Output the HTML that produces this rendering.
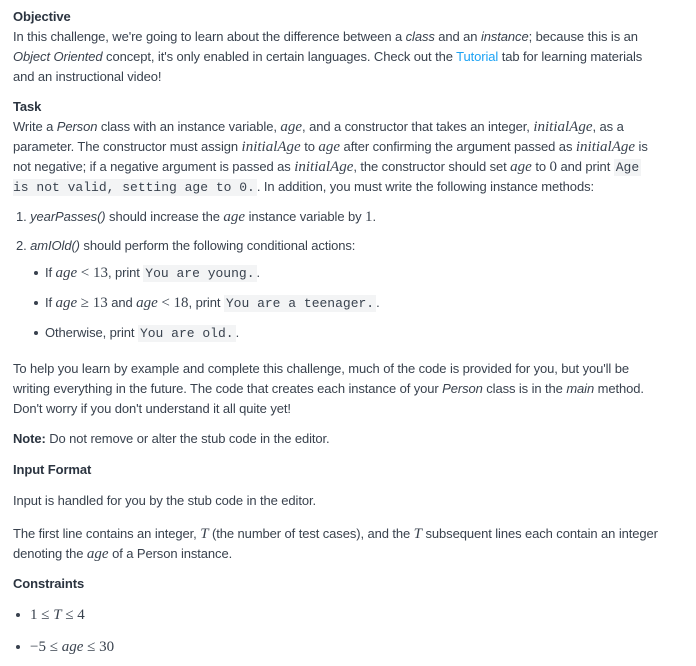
<!DOCTYPE html>
<html><head><meta charset="utf-8"><style>
body{margin:0;width:696px;height:666px;background:#fff;overflow:hidden;font-family:"Liberation Sans",sans-serif;font-size:13px;letter-spacing:-0.1px;color:#39424e;}
.l{position:absolute;left:13px;white-space:nowrap;line-height:20px;height:20px;}
b{font-weight:bold;color:#2b3440}
i{font-style:italic}
.m{font-family:"Liberation Serif",serif;font-style:italic;font-size:15px;letter-spacing:0}
.n{font-family:"Liberation Serif",serif;font-size:15px;letter-spacing:0}
code{font-family:"Liberation Mono",monospace;font-size:13px;letter-spacing:0;background:#f3f4f5;padding:1px 2px;color:#39424e}
a{color:#1ba2f4;text-decoration:none}
.bul{position:absolute;left:34px;width:4px;height:4px;border-radius:50%;background:#39424e}
</style></head><body>
<div class="l" style="top:7px"><b>Objective</b></div>
<div class="l" style="top:27px">In this challenge, we're going to learn about the difference between a <i>class</i> and an <i>instance</i>; because this is an</div>
<div class="l" style="top:47px"><i>Object Oriented</i> concept, it's only enabled in certain languages. Check out the <a>Tutorial</a> tab for learning materials</div>
<div class="l" style="top:67px">and an instructional video!</div>
<div class="l" style="top:97px"><b>Task</b></div>
<div class="l" style="top:117px">Write a <i>Person</i> class with an instance variable, <span class="m">age</span>, and a constructor that takes an integer, <span class="m">initialAge</span>, as a</div>
<div class="l" style="top:137px">parameter. The constructor must assign <span class="m">initialAge</span> to <span class="m">age</span> after confirming the argument passed as <span class="m">initialAge</span> is</div>
<div class="l" style="top:157px">not negative; if a negative argument is passed as <span class="m">initialAge</span>, the constructor should set <span class="m">age</span> to <span class="n">0</span> and print <code>Age</code></div>
<div class="l" style="top:177px"><code style="padding-left:0">is not valid, setting age to 0.</code>. In addition, you must write the following instance methods:</div>
<div class="l" style="top:207px;left:16px">1. <i>yearPasses()</i> should increase the <span class="m">age</span> instance variable by <span class="n">1</span>.</div>
<div class="l" style="top:236px;left:16px">2. <i>amIOld()</i> should perform the following conditional actions:</div>
<div class="bul" style="top:271px"></div>
<div class="l" style="top:263px;left:45px">If <span class="m">age</span> <span class="n">&lt; 13</span>, print <code>You are young.</code>.</div>
<div class="bul" style="top:301px"></div>
<div class="l" style="top:293px;left:45px">If <span class="m">age</span> <span class="n">≥ 13</span> and <span class="m">age</span> <span class="n">&lt; 18</span>, print <code>You are a teenager.</code>.</div>
<div class="bul" style="top:331px"></div>
<div class="l" style="top:323px;left:45px">Otherwise, print <code>You are old.</code>.</div>
<div class="l" style="top:359px">To help you learn by example and complete this challenge, much of the code is provided for you, but you'll be</div>
<div class="l" style="top:379px">writing everything in the future. The code that creates each instance of your <i>Person</i> class is in the <i>main</i> method.</div>
<div class="l" style="top:399px">Don't worry if you don't understand it all quite yet!</div>
<div class="l" style="top:429px"><b>Note:</b> Do not remove or alter the stub code in the editor.</div>
<div class="l" style="top:460px"><b>Input Format</b></div>
<div class="l" style="top:491px">Input is handled for you by the stub code in the editor.</div>
<div class="l" style="top:524px">The first line contains an integer, <span class="m">T</span> (the number of test cases), and the <span class="m">T</span> subsequent lines each contain an integer</div>
<div class="l" style="top:544px">denoting the <span class="m">age</span> of a Person instance.</div>
<div class="l" style="top:574px"><b>Constraints</b></div>
<div class="bul" style="top:613px;left:16px"></div>
<div class="l" style="top:605px;left:30px"><span class="n">1 ≤ </span><span class="m">T</span><span class="n"> ≤ 4</span></div>
<div class="bul" style="top:645px;left:16px"></div>
<div class="l" style="top:637px;left:30px"><span class="n">−5 ≤ </span><span class="m">age</span><span class="n"> ≤ 30</span></div>
</body></html>
